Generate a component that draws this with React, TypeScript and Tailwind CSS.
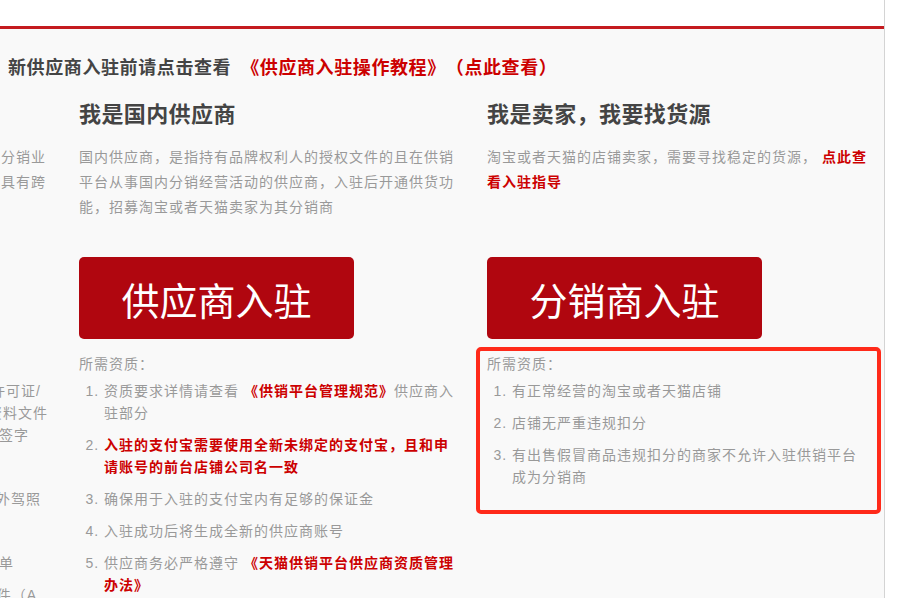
import React from 'react';

const red = 'text-[#cc0000] font-bold';

const Button = ({ label }: { label: string }) => (
  <div className="flex h-[82px] w-[275px] items-center justify-center rounded-[5px] bg-[#b0060f] pt-[8px] text-[38px] leading-none text-white">
    {label}
  </div>
);

// the clipped column on the left – only the line ends show in the window
const ClippedLine = ({ text, pr }: { text: string; pr: string }) => (
  <span className={`block whitespace-nowrap text-right ${pr}`}>{text}</span>
);

const App = () => {
  return (
    <div className="flex h-[598px] w-full overflow-hidden bg-white font-['Liberation_Sans','Noto_Sans_CJK_SC',sans-serif] [text-spacing-trim:space-all]">
      <div className="flex w-[884px] shrink-0 flex-col">
        <div className="h-[26px] bg-white" />
        <div className="h-[3px] bg-[#c41a1e]" />
        <div className="flex-1 overflow-hidden bg-[#f9f9f9] pt-[26px]">
          <div className="pl-[8px] text-[18px] font-bold leading-[26px] tracking-[0.6px] text-[#444]">
            新供应商入驻前请点击查看
            <span className="ml-[10px] text-[#cc0000]">《供应商入驻操作教程》（点此查看）</span>
          </div>

          <div className="ml-[-329px] mt-[19px] flex gap-[24px]">
            {/* column 0 (mostly off screen) */}
            <div className="w-[384px] shrink-0">
              <h2 className="text-[22px] font-bold leading-[30px] tracking-[0.4px] text-[#444]">我是海外供应商</h2>
              <p className="mt-[15px] h-[112px] text-[14px] leading-[25px] tracking-[1px] text-[#999]">
                分销商，是指有意愿在供销平台经营商品的商家，分销业务包括淘宝、天猫店铺及国内外各电商平台，同时具有跨境经营的能力
              </p>
              <div className="h-[82px]" />
              <div className="mt-[14px] text-[14px] leading-[22px] tracking-[1px] text-[#999]">
                <div>所需资质：</div>
                <ol className="mt-[5px] flex list-decimal flex-col gap-[10px] pl-[25px]">
                  <li>
                    <ClippedLine text="税务登记证、组织机构代码证、授权许可证/" pr="pr-[14px]" />
                    <ClippedLine text="商标注册证等相关资料文件" pr="pr-[7px]" />
                    <ClippedLine text="需加盖公司公章并签字" pr="pr-[26px]" />
                  </li>
                  <li>
                    <ClippedLine text="海外公司注册证明" pr="pr-[80px]" />
                  </li>
                  <li>
                    <ClippedLine text="法人身份证或护照、境外驾照" pr="pr-[14px]" />
                  </li>
                  <li>
                    <ClippedLine text="跨境电商经营资质证明" pr="pr-[80px]" />
                  </li>
                  <li>
                    <ClippedLine text="货物进口报关单" pr="pr-[41px]" />
                  </li>
                  <li>
                    <ClippedLine text="商品检验检疫证明文件（A" pr="pr-[18px]" />
                  </li>
                </ol>
              </div>
            </div>

            {/* column 1 */}
            <div className="w-[384px] shrink-0">
              <h2 className="text-[22px] font-bold leading-[30px] tracking-[0.4px] text-[#444]">我是国内供应商</h2>
              <p className="mt-[15px] h-[112px] text-[14px] leading-[25px] tracking-[1px] text-[#999]">
                国内供应商，是指持有品牌权利人的授权文件的且在供销平台从事国内分销经营活动的供应商，入驻后开通供货功能，招募淘宝或者天猫卖家为其分销商
              </p>
              <Button label="供应商入驻" />
              <div className="mt-[14px] text-[14px] leading-[22px] tracking-[1px] text-[#999]">
                <div>所需资质：</div>
                <ol className="mt-[5px] flex list-decimal flex-col gap-[10px] pl-[25px]">
                  <li>
                    资质要求详情请查看 <span className={red}>《供销平台管理规范》</span>供应商入驻部分
                  </li>
                  <li>
                    <span className={red}>入驻的支付宝需要使用全新未绑定的支付宝，且和申请账号的前台店铺公司名一致</span>
                  </li>
                  <li>确保用于入驻的支付宝内有足够的保证金</li>
                  <li>入驻成功后将生成全新的供应商账号</li>
                  <li>
                    供应商务必严格遵守 <span className={red}>《天猫供销平台供应商资质管理办法》</span>
                  </li>
                </ol>
              </div>
            </div>

            {/* column 2 */}
            <div className="w-[384px] shrink-0">
              <h2 className="text-[22px] font-bold leading-[30px] tracking-[0.4px] text-[#444]">我是卖家，我要找货源</h2>
              <p className="mt-[15px] h-[112px] text-[14px] leading-[25px] tracking-[1px] text-[#999]">
                淘宝或者天猫的店铺卖家，需要寻找稳定的货源， <span className={red}>点此查看入驻指导</span>
              </p>
              <Button label="分销商入驻" />
              <div className="ml-[-11px] mr-[-10px] mt-[8px] rounded-[5px] border-[4px] border-[#ff2a1a] pb-[22px] pl-[7px] pr-[12px] pt-[2px] text-[14px] leading-[22px] tracking-[1px] text-[#999]">
                <div>所需资质：</div>
                <ol className="mt-[5px] flex list-decimal flex-col gap-[10px] pl-[25px]">
                  <li>有正常经营的淘宝或者天猫店铺</li>
                  <li>店铺无严重违规扣分</li>
                  <li>有出售假冒商品违规扣分的商家不允许入驻供销平台成为分销商</li>
                </ol>
              </div>
            </div>
          </div>
        </div>
      </div>
      <div className="w-px shrink-0 bg-[#d4d4d4]" />
      <div className="flex-1 bg-white" />
    </div>
  );
};

export default App;
